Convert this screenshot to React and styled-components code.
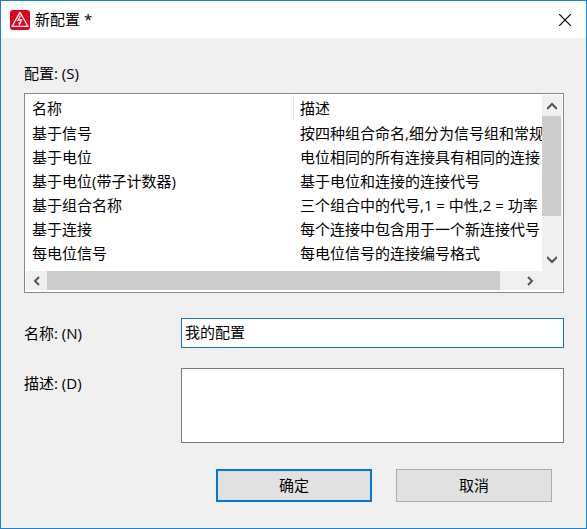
import React, { useState } from "react";
import styled, { createGlobalStyle } from "styled-components";

const GlobalStyle = createGlobalStyle`
  *, *::before, *::after {
    box-sizing: border-box;
  }

  body {
    margin: 0;
  }

  body, button, input, textarea {
    font-family: "Open Sans", "Noto Sans CJK SC", sans-serif;
    font-size: 15px;
    font-weight: 400;
    line-height: 24px;
    color: #000;
  }
`;

const Dialog = styled.main`
  display: flex;
  flex-direction: column;
  min-height: 100vh;
  background: #f0f0f0;
  border: 1px solid #1883d7;
`;

const TitleBar = styled.header`
  display: flex;
  align-items: center;
  gap: 5px;
  height: 37px;
  padding-left: 9px;
  background: #fff;
`;

const Title = styled.h1`
  flex: 1;
  margin: 0;
  padding-bottom: 2px;
  font-size: 15px;
  font-weight: 400;
`;

const CloseButton = styled.button`
  display: flex;
  align-items: center;
  justify-content: center;
  width: 42px;
  height: 37px;
  padding: 0;
  border: none;
  background: none;
`;

const Content = styled.form`
  display: flex;
  flex-direction: column;
  padding: 23px 22px 26px 23px;
`;

const ListLabel = styled.span`
  margin-bottom: 8px;
`;

const ListBox = styled.div`
  display: grid;
  grid-template-columns: minmax(0, 1fr) 20px;
  grid-template-rows: 176px 19px;
  padding: 1px 1px 2px;
  border: 1px solid #828790;
  background: #fff;
`;

const Viewport = styled.div`
  overflow: hidden;
`;

const Table = styled.table`
  width: 100%;
  table-layout: fixed;
  border-collapse: separate;
  border-spacing: 0;
`;

const HeadCell = styled.th`
  width: ${(props) => (props.$first ? "268px" : "auto")};
  height: 26px;
  padding: 0 0 0 6px;
  border-right: ${(props) => (props.$first ? "1px solid #e5e5e5" : "none")};
  font-weight: 400;
  text-align: left;
`;

const Cell = styled.td`
  height: 24px;
  padding: 0 0 0 6px;
  overflow: hidden;
  white-space: nowrap;
`;

const ScrollBar = styled.div`
  display: flex;
  flex-direction: ${(props) => (props.$vertical ? "column" : "row")};
  padding: ${(props) => (props.$vertical ? "0 0 2px" : "0 2px 0 0")};
  background: #f0f0f0;
`;

const ScrollButton = styled.button`
  display: flex;
  align-items: center;
  justify-content: center;
  flex: 0 0 21px;
  padding: 0;
  border: none;
  background: none;
`;

const Track = styled.div`
  flex: 1;
`;

const Thumb = styled.div`
  width: ${(props) => (props.$vertical ? "19px" : "96%")};
  height: ${(props) => (props.$vertical ? "76%" : "100%")};
  background: #cdcdcd;
`;

const Corner = styled.div`
  background: #f0f0f0;
`;

const Fields = styled.div`
  display: grid;
  grid-template-columns: 157px minmax(0, 1fr);
  row-gap: 20px;
  margin-top: 25px;
`;

const Label = styled.label`
  padding-top: 3px;
`;

const TextInput = styled.input`
  width: 100%;
  height: 30px;
  padding: 0 3px 4px;
  border: 1px solid #1874bc;
  border-radius: 0;
  outline: none;
  background: #fff;
`;

const TextArea = styled.textarea`
  display: block;
  width: 100%;
  height: 75px;
  padding: 1px 3px;
  border: 1px solid #7a7a7a;
  border-radius: 0;
  outline: none;
  resize: none;
  background: #fff;
`;

const Actions = styled.div`
  display: flex;
  justify-content: flex-end;
  gap: 24px;
  margin-top: 26px;
  padding-right: 12px;
`;

const Button = styled.button`
  width: 156px;
  height: 33px;
  padding: 0 0 2px;
  border: ${(props) =>
    props.$primary ? "2px solid #0078d7" : "1px solid #adadad"};
  background: #e1e1e1;
`;

const rows = [
  ["基于信号", "按四种组合命名,细分为信号组和常规"],
  ["基于电位", "电位相同的所有连接具有相同的连接"],
  ["基于电位(带子计数器)", "基于电位和连接的连接代号"],
  ["基于组合名称", "三个组合中的代号,1 = 中性,2 = 功率"],
  ["基于连接", "每个连接中包含用于一个新连接代号"],
  ["每电位信号", "每电位信号的连接编号格式"],
];

const arrows = {
  up: "M0 8 L5 3 L10 8",
  down: "M0 3 L5 8 L10 3",
  left: "M7 1 L3 5 L7 9",
  right: "M3 1 L7 5 L3 9",
};

function AppIcon() {
  return (
    <svg width="20" height="20" viewBox="0 0 20 20" aria-hidden="true">
      <rect width="20" height="20" rx="3" fill="#e2001f" />
      <path
        d="M10 2.4 L18 16.4 H2 Z"
        fill="none"
        stroke="#fff"
        strokeWidth="1.2"
        strokeLinejoin="round"
      />
      <path
        d="M10.6 5.5 L8 10.4 L11.5 9.7 L9.6 14"
        fill="none"
        stroke="#fff"
        strokeWidth="1.2"
      />
      <path d="M8.3 12.3 L11.3 13.3 L9 15.6 Z" fill="#fff" />
    </svg>
  );
}

function Arrow({ direction, label }) {
  return (
    <ScrollButton type="button" aria-label={label}>
      <svg width="10" height="10" viewBox="0 0 10 10">
        <path
          d={arrows[direction]}
          fill="none"
          stroke="#555"
          strokeWidth="2"
        />
      </svg>
    </ScrollButton>
  );
}

function ConfigList() {
  return (
    <ListBox>
      <Viewport>
        <Table aria-labelledby="config-label">
          <thead>
            <tr>
              <HeadCell $first>名称</HeadCell>
              <HeadCell>描述</HeadCell>
            </tr>
          </thead>
          <tbody>
            {rows.map(([name, description]) => (
              <tr key={name}>
                <Cell>{name}</Cell>
                <Cell>{description}</Cell>
              </tr>
            ))}
          </tbody>
        </Table>
      </Viewport>
      <ScrollBar $vertical>
        <Arrow direction="up" label="向上滚动" />
        <Track>
          <Thumb $vertical />
        </Track>
        <Arrow direction="down" label="向下滚动" />
      </ScrollBar>
      <ScrollBar>
        <Arrow direction="left" label="向左滚动" />
        <Track>
          <Thumb />
        </Track>
        <Arrow direction="right" label="向右滚动" />
      </ScrollBar>
      <Corner />
    </ListBox>
  );
}

export default function App() {
  const [name, setName] = useState("我的配置");
  const [description, setDescription] = useState("");

  return (
    <>
      <GlobalStyle />
      <Dialog>
        <TitleBar>
          <AppIcon />
          <Title>新配置 *</Title>
          <CloseButton type="button" aria-label="关闭">
            <svg width="12" height="12" viewBox="0 0 12 12">
              <path d="M0 0 L12 12 M12 0 L0 12" stroke="#000" strokeWidth="1.2" />
            </svg>
          </CloseButton>
        </TitleBar>

        <Content onSubmit={(e) => e.preventDefault()}>
          <ListLabel id="config-label">配置: (S)</ListLabel>
          <ConfigList />

          <Fields>
            <Label htmlFor="name">名称: (N)</Label>
            <TextInput
              id="name"
              value={name}
              onChange={(e) => setName(e.target.value)}
            />
            <Label htmlFor="description">描述: (D)</Label>
            <TextArea
              id="description"
              value={description}
              onChange={(e) => setDescription(e.target.value)}
            />
          </Fields>

          <Actions>
            <Button type="submit" $primary>
              确定
            </Button>
            <Button type="button">取消</Button>
          </Actions>
        </Content>
      </Dialog>
    </>
  );
}
